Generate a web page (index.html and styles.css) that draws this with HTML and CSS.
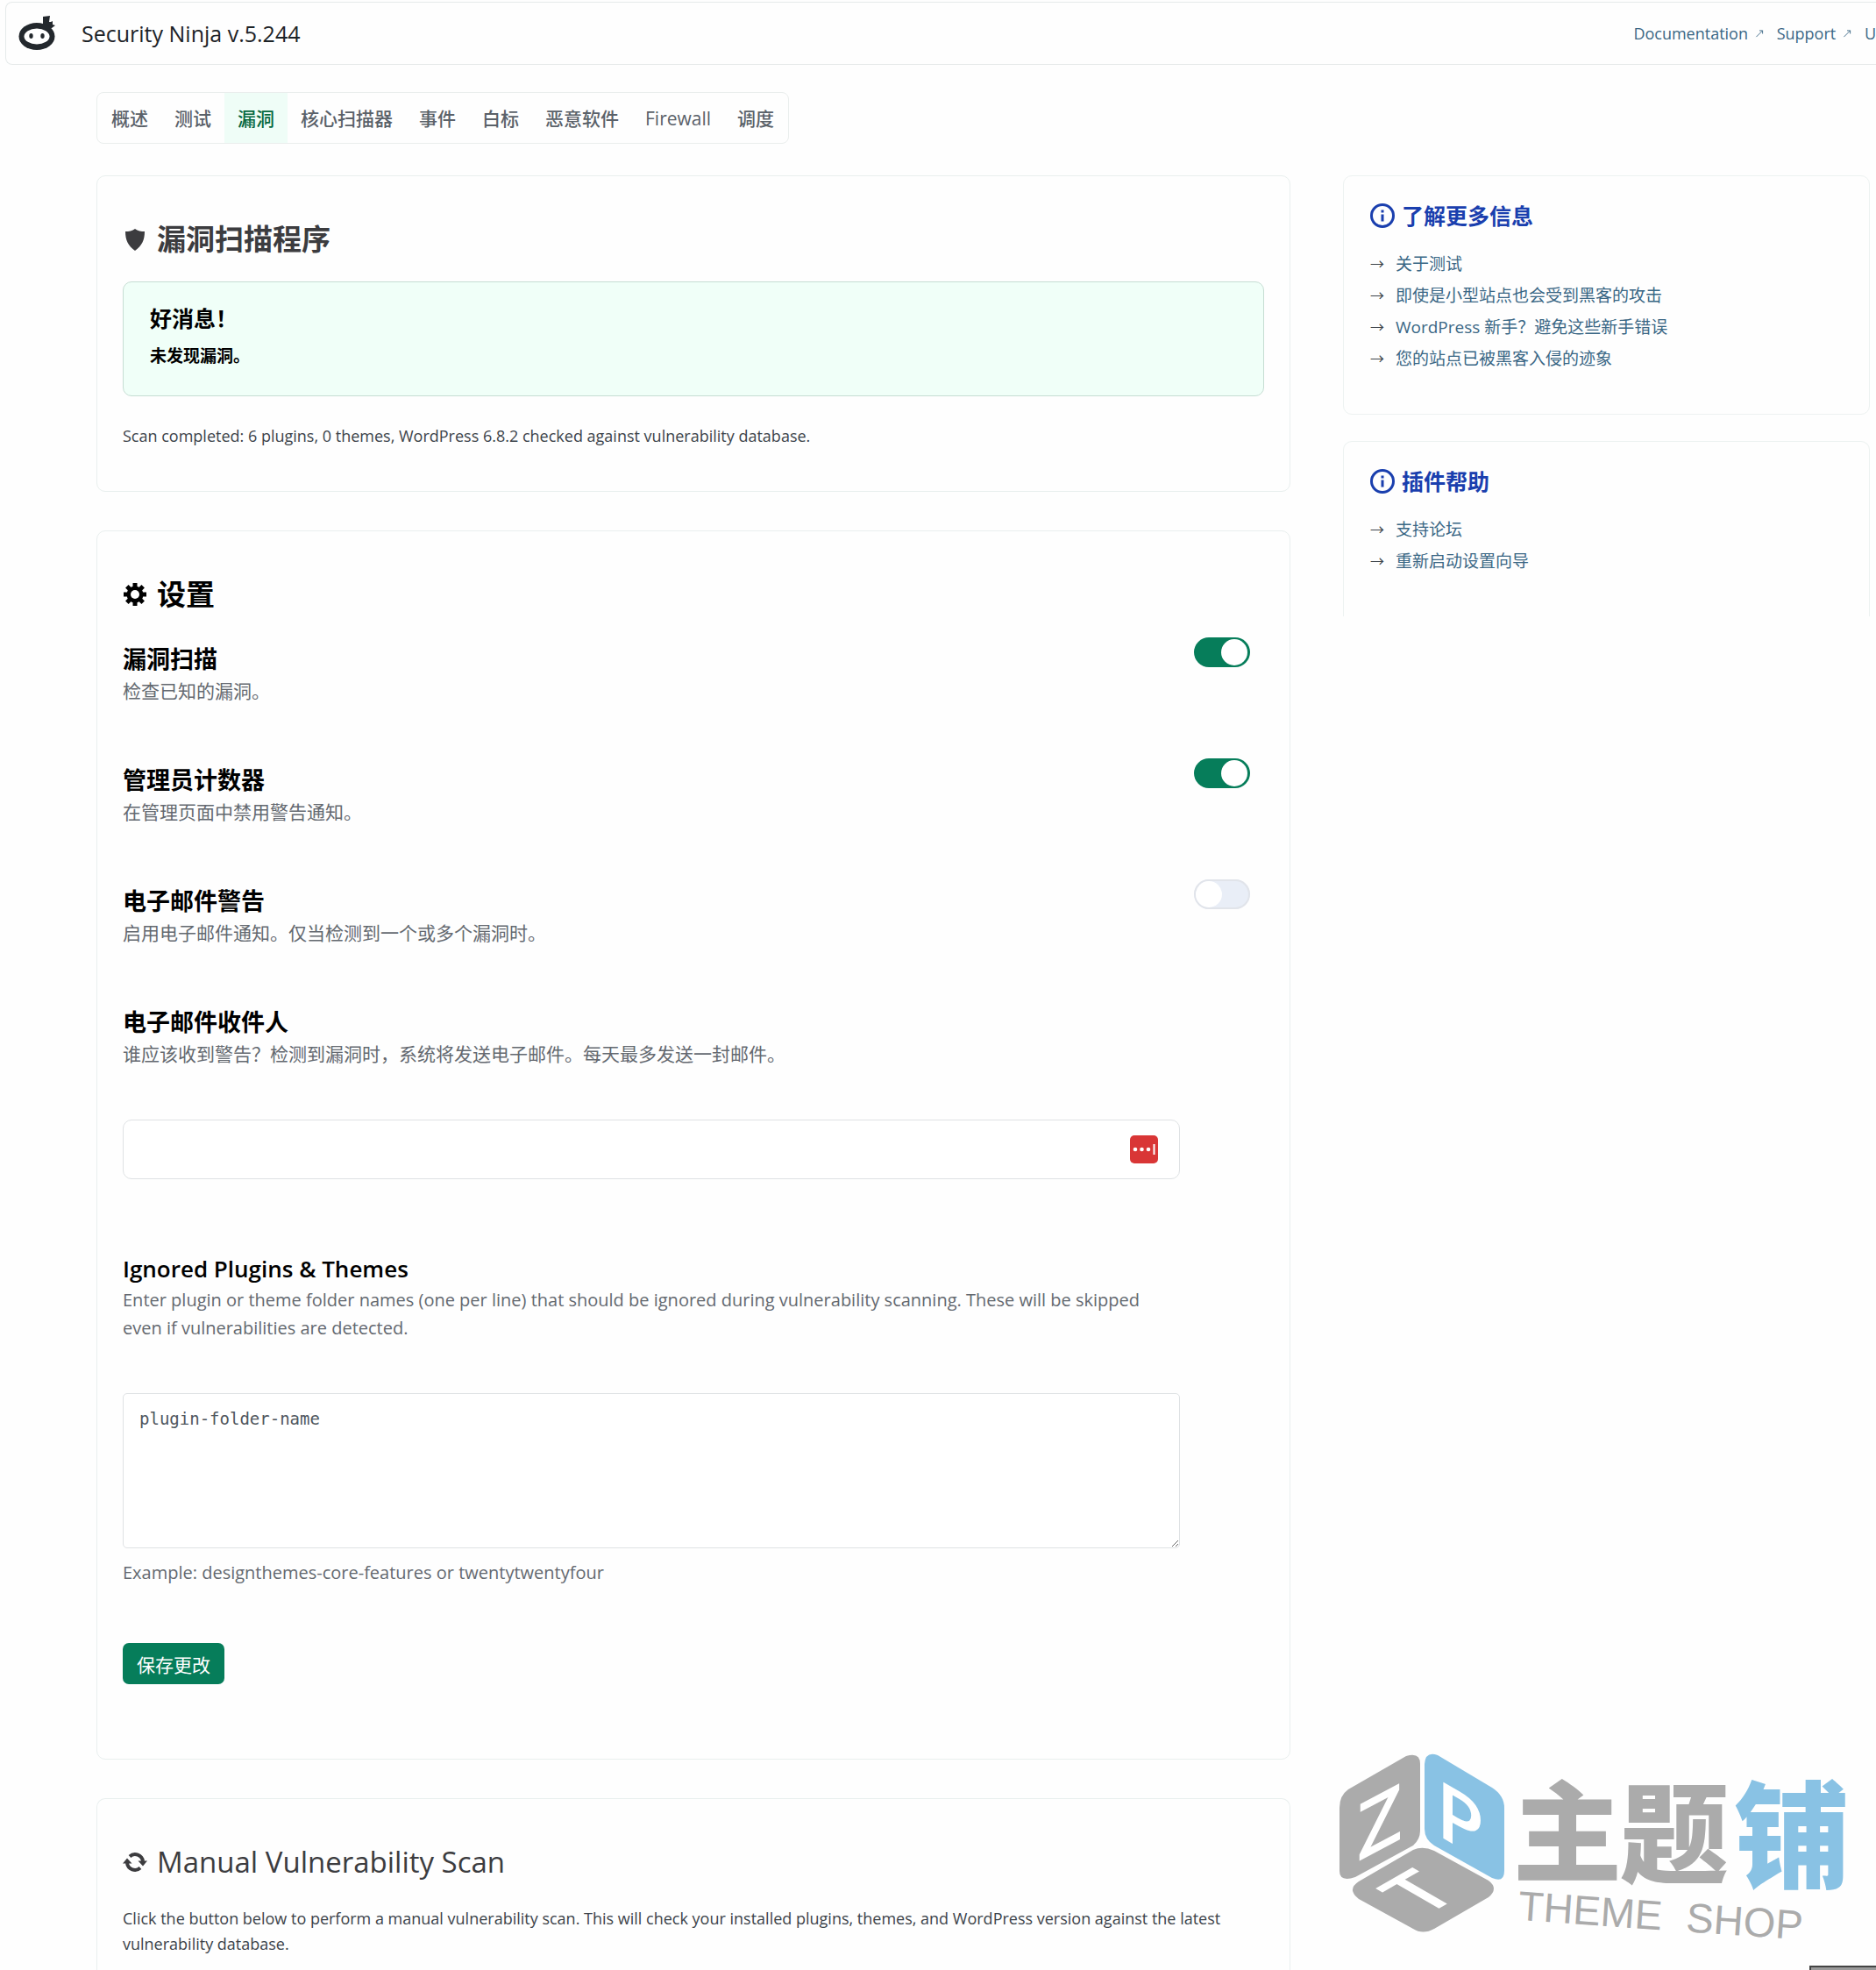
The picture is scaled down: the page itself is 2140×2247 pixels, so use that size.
FILE: index.html
```html
<!DOCTYPE html>
<html lang="zh-CN">
<head>
    <meta charset="UTF-8">
    <meta name="viewport" content="width=device-width, initial-scale=1.0">
    <title>Security Ninja</title>
    <link rel="stylesheet" href="styles.css">
</head>
<body>
    <header class="topbar">
        <svg class="logo" viewBox="0 0 42 40" aria-hidden="true">
            <path fill="#23282d" d="M28 1l8-1-1 7 2 0 2-1 0 4 3 1-4 3-6 2-4-5z"/>
            <ellipse cx="21" cy="23.500" rx="20.500" ry="15.500" fill="#23282d"/>
            <ellipse cx="21" cy="23.500" rx="14.500" ry="9" fill="#fff"/>
            <ellipse cx="14.500" cy="23" rx="2.200" ry="3" fill="#23282d"/>
            <ellipse cx="27.500" cy="23" rx="2.200" ry="3" fill="#23282d"/>
        </svg>
        <h1>Security Ninja v.5.244</h1>
        <div class="top-links">
            <a href="#">Documentation <svg viewBox="0 0 10 10"><path d="M1 9L9 1M5 1h4v4"/></svg></a>
            <a href="#">Support <svg viewBox="0 0 10 10"><path d="M1 9L9 1M5 1h4v4"/></svg></a>
            <a href="#">U</a>
        </div>
    </header>

    <div class="page">
        <nav class="tabs">
            <a href="#">概述</a>
            <a href="#">测试</a>
            <a href="#" class="active">漏洞</a>
            <a href="#">核心扫描器</a>
            <a href="#">事件</a>
            <a href="#">白标</a>
            <a href="#">恶意软件</a>
            <a href="#">Firewall</a>
            <a href="#">调度</a>
        </nav>

        <div class="columns">
            <main class="main">
                <section class="card">
                    <h2 class="grey">
                        <svg class="icon" viewBox="0 0 28 28"><path d="M14 2c3 2.500 7 3 11 3 0 10-3 16-11 22C6 21 3 15 3 5c4 0 8-.5 11-3z"/></svg>
                        漏洞扫描程序
                    </h2>
                    <div class="notice">
                        <h3>好消息！</h3>
                        <p>未发现漏洞。</p>
                    </div>
                    <p class="text">Scan completed: 6 plugins, 0 themes, WordPress 6.8.2 checked against vulnerability database.</p>
                </section>

                <section class="card settings">
                    <h2>
                        <svg class="icon" viewBox="0 0 28 28">
                            <rect x="11.500" y="1" width="5" height="26"/>
                            <rect x="1" y="11.500" width="26" height="5"/>
                            <rect x="11.500" y="1" width="5" height="26" transform="rotate(45 14 14)"/>
                            <rect x="11.500" y="1" width="5" height="26" transform="rotate(-45 14 14)"/>
                            <circle cx="14" cy="14" r="9.500"/>
                            <circle cx="14" cy="14" r="5" fill="#fff"/>
                        </svg>
                        设置
                    </h2>
                    <form>
                        <div class="row">
                            <div class="info">
                                <label for="vulns">漏洞扫描</label>
                                <p>检查已知的漏洞。</p>
                            </div>
                            <input type="checkbox" class="toggle" id="vulns" checked>
                        </div>
                        <div class="row">
                            <div class="info">
                                <label for="counter">管理员计数器</label>
                                <p>在管理页面中禁用警告通知。</p>
                            </div>
                            <input type="checkbox" class="toggle" id="counter" checked>
                        </div>
                        <div class="row">
                            <div class="info">
                                <label for="warnings">电子邮件警告</label>
                                <p>启用电子邮件通知。仅当检测到一个或多个漏洞时。</p>
                            </div>
                            <input type="checkbox" class="toggle" id="warnings">
                        </div>
                        <div class="field">
                            <div class="info">
                                <label for="recipient">电子邮件收件人</label>
                                <p>谁应该收到警告？检测到漏洞时，系统将发送电子邮件。每天最多发送一封邮件。</p>
                            </div>
                            <div class="input-wrap">
                                <input type="text" id="recipient">
                                <svg class="fill-icon" viewBox="0 0 32 32">
                                    <rect width="32" height="32" rx="5" fill="#d93636"/>
                                    <circle cx="6" cy="16" r="2.300" fill="#fff"/>
                                    <circle cx="13.500" cy="16" r="2.300" fill="#fff"/>
                                    <circle cx="21" cy="16" r="2.300" fill="#fff"/>
                                    <rect x="26.500" y="10" width="2" height="12" fill="#fff"/>
                                </svg>
                            </div>
                        </div>
                        <div class="field ignored">
                            <div class="info">
                                <label for="ignored">Ignored Plugins &amp; Themes</label>
                                <p>Enter plugin or theme folder names (one per line) that should be ignored during vulnerability scanning. These will be skipped even if vulnerabilities are detected.</p>
                            </div>
                            <textarea id="ignored" placeholder="plugin-folder-name"></textarea>
                            <p class="example">Example: designthemes-core-features or twentytwentyfour</p>
                        </div>
                        <button type="button" class="save">保存更改</button>
                    </form>
                </section>

                <section class="card last">
                    <h2 class="grey">
                        <svg class="icon" viewBox="0 0 28 28">
                            <path d="M8 7.500a9 9 0 0 1 15 5.500M20 20.500a9 9 0 0 1-15-5.500" fill="none" stroke="currentColor" stroke-width="4"/>
                            <path d="M0 15.500L5 9.500l5.500 6zM17.500 12.500H28l-5 6z"/>
                        </svg>
                        Manual Vulnerability Scan
                    </h2>
                    <p class="text">Click the button below to perform a manual vulnerability scan. This will check your installed plugins, themes, and WordPress version against the latest vulnerability database.</p>
                </section>
            </main>

            <aside class="sidebar">
                <section class="box">
                    <h3>
                        <svg viewBox="0 0 28 28"><circle cx="14" cy="14" r="12.500"/><path d="M14 12.500v8M14 7.500v3"/></svg>
                        了解更多信息
                    </h3>
                    <ul>
                        <li><a href="#">关于测试</a></li>
                        <li><a href="#">即使是小型站点也会受到黑客的攻击</a></li>
                        <li><a href="#">WordPress 新手？避免这些新手错误</a></li>
                        <li><a href="#">您的站点已被黑客入侵的迹象</a></li>
                    </ul>
                </section>
                <section class="box open">
                    <h3>
                        <svg viewBox="0 0 28 28"><circle cx="14" cy="14" r="12.500"/><path d="M14 12.500v8M14 7.500v3"/></svg>
                        插件帮助
                    </h3>
                    <ul>
                        <li><a href="#">支持论坛</a></li>
                        <li><a href="#">重新启动设置向导</a></li>
                    </ul>
                </section>
            </aside>
        </div>
    </div>

    <svg class="watermark" viewBox="0 0 580 212">
        <path fill="#ababab" d="M10 41L76 3Q92-2 92 12V88Q92 98 84 105L18 141Q0 147 0 134V62Q0 48 10 41z"/>
        <path fill="#89c2e4" d="M97 12Q98-3 112 2L174 39Q188 48 188 62V134Q188 148 174 142L108 105Q97 98 97 86z"/>
        <path fill="#ababab" d="M84 110Q95 105 108 111L170 145Q182 154 170 164L108 200Q95 207 84 200L22 166Q8 155 22 146z"/>
        <g class="cube-letters">
            <text transform="translate(20 124) skewY(-28)">Z</text>
            <text transform="translate(110 92) skewY(30)">P</text>
            <text transform="matrix(.87 -.5 .87 .5 118 174)" text-anchor="middle">T</text>
        </g>
        <g class="shop-name">
            <text x="198" y="136">主</text>
            <text x="320" y="138">题</text>
            <text x="450" y="143" class="blue">铺</text>
        </g>
        <g class="shop-latin" transform="rotate(4 205 190)">
            <text x="203" y="190">THEME</text>
            <text x="395" y="190">SHOP</text>
        </g>
    </svg>
    <div class="corner"></div>
</body>
</html>
```

FILE: styles.css
```css
* {
    box-sizing: border-box;
}

body {
    margin: 0;
    min-height: 100vh;
    display: flex;
    flex-direction: column;
    background-color: #fefefe;
    color: #3c434a;
    font-family: "Open Sans", "Noto Sans CJK SC", sans-serif;
    font-size: 19px;
    line-height: 29px;
    overflow-x: hidden;
}

h1, h2, h3, p, ul {
    margin: 0;
    padding: 0;
}

a {
    color: #3a6785;
    text-decoration: none;
}

/* Header */
.topbar {
    display: flex;
    align-items: center;
    height: 72px;
    margin: 2px 0 0 6px;
    padding-left: 14px;
    border: 1px solid #e6eaea;
    border-right: none;
    border-radius: 8px 0 0 8px;
}

.logo {
    width: 42px;
    height: 40px;
}

.topbar h1 {
    margin-left: 30px;
    color: #1d2327;
    font-size: 25px;
    font-weight: 500;
}

.top-links {
    display: flex;
    gap: 15px;
    margin-left: auto;
    font-size: 18px;
}

.top-links svg {
    width: 10px;
    height: 9px;
    margin: 0 0 2px 3px;
    fill: none;
    stroke: #3a6785;
}

/* Tabs */
.page {
    flex: 1;
    display: flex;
    flex-direction: column;
    align-items: flex-start;
    padding: 31px 7px 0 110px;
}

.tabs {
    display: flex;
    padding: 0 1px;
    border: 1px solid #eaeeed;
    border-radius: 8px;
}

.tabs a {
    padding: 15px 15px 13px;
    color: #5a6169;
    font-size: 21px;
    font-weight: 500;
}

.tabs .active {
    background-color: #effdf7;
    color: #04683f;
}

/* Cards */
.columns {
    flex: 1;
    display: flex;
    gap: 60px;
    align-self: stretch;
    margin-top: 36px;
}

.main {
    flex: 1;
    display: flex;
    flex-direction: column;
    gap: 44px;
}

.card {
    padding: 48px 29px;
    border: 1px solid #e9efee;
    border-radius: 10px;
}

.card.last {
    flex: 1;
    padding-bottom: 0;
    border-bottom: none;
    border-radius: 10px 10px 0 0;
}

h2 {
    display: flex;
    align-items: center;
    gap: 11px;
    color: #000;
    font-size: 33px;
    font-weight: 600;
    line-height: 48px;
}

.grey {
    color: #3c3c3f;
}

.last h2 {
    font-weight: 500;
}

.icon {
    width: 28px;
    height: 28px;
    fill: currentColor;
}

.notice {
    margin: 24px 0 31px;
    padding: 23px 30px 30px;
    border: 1px solid #c6ddd3;
    border-radius: 10px;
    background-color: #f0fff8;
    color: #000;
}

.notice h3 {
    font-size: 25px;
    line-height: 36px;
}

.notice p {
    margin-top: 11px;
    font-weight: 700;
}

.text {
    font-size: 18px;
}

.last .text {
    margin-top: 26px;
}

/* Settings */
.row {
    display: flex;
    justify-content: space-between;
    align-items: flex-start;
    height: 138px;
    padding-right: 16px;
}

.settings form {
    padding-top: 25px;
}

.info label {
    display: block;
    color: #000;
    font-size: 27px;
    font-weight: 600;
    line-height: 40px;
}

.info p, .example {
    color: #646970;
    font-size: 21px;
    line-height: 32px;
}

.row .info {
    padding-top: 5px;
}

.toggle {
    appearance: none;
    position: relative;
    width: 64px;
    height: 34px;
    margin: 0;
    border-radius: 17px;
    background-color: #e9eef7;
    box-shadow: inset 0 0 0 2px #e1e4ea;
}

.toggle::before {
    content: "";
    position: absolute;
    top: 2px;
    left: 2px;
    width: 30px;
    height: 30px;
    border-radius: 50%;
    background-color: #fff;
}

.toggle:checked {
    background-color: #067d5a;
    box-shadow: none;
}

.toggle:checked::before {
    left: 31px;
}

.field {
    max-width: 1206px;
    padding-top: 5px;
}

.input-wrap {
    position: relative;
    margin-top: 59px;
}

.field input, .field textarea {
    display: block;
    width: 100%;
    border: 1px solid #dfe2e4;
    border-radius: 10px;
    background-color: #fff;
}

.field input {
    height: 68px;
    padding: 0 64px 0 18px;
    font-size: 21px;
}

.fill-icon {
    position: absolute;
    top: 18px;
    right: 25px;
    width: 32px;
    height: 32px;
}

.ignored {
    margin-top: 77px;
}

.field textarea {
    height: 177px;
    margin-top: 58px;
    padding: 14px 18px;
    border-radius: 5px;
    font-family: "DejaVu Sans Mono", monospace;
    font-size: 19px;
    line-height: 29px;
}

.field textarea::placeholder {
    color: #50575e;
}

.ignored label {
    font-size: 26px;
}

.ignored p {
    font-size: 20px;
}

.example {
    margin-top: 12px;
}

.save {
    display: block;
    height: 47px;
    margin: 64px 0 37px;
    padding: 0 16px;
    border: none;
    border-radius: 7px;
    background-color: #067d5a;
    color: #fff;
    font-family: inherit;
    font-size: 21px;
    font-weight: 400;
}

/* Sidebar */
.sidebar {
    width: 601px;
}

.box {
    margin-bottom: 30px;
    padding: 27px 30px 45px;
    border: 1px solid #edf2f1;
    border-radius: 10px;
}

.box.open {
    border-bottom: none;
    border-radius: 10px 10px 0 0;
}

.box h3 {
    display: flex;
    align-items: center;
    gap: 8px;
    margin-bottom: 19px;
    color: #1a3fae;
    font-size: 25px;
    line-height: 36px;
}

.box h3 svg {
    width: 28px;
    height: 28px;
    fill: none;
    stroke: currentColor;
    stroke-width: 3;
}

.box ul {
    list-style: none;
}

.box li {
    display: flex;
    line-height: 36px;
}

.box li::before {
    content: "→";
    width: 29px;
    font-size: 16px;
}

/* Watermark over the page */
.watermark {
    position: absolute;
    top: 2000px;
    right: 32px;
    width: 580px;
    height: 212px;
    overflow: visible;
}

.cube-letters {
    fill: #fff;
    font-family: "Open Sans", sans-serif;
    font-size: 90px;
    font-weight: 600;
}

.shop-name {
    fill: #ababab;
    font-family: "Noto Sans CJK SC", sans-serif;
    font-size: 124px;
    font-weight: 900;
}

.shop-name .blue {
    fill: #89c2e4;
    font-size: 132px;
}

.shop-latin {
    fill: #ababab;
    font-family: "Liberation Sans", sans-serif;
    font-size: 47px;
}

.corner {
    position: fixed;
    right: 0;
    bottom: 0;
    width: 76px;
    height: 5px;
    border-top: 2px solid #444;
    border-left: 2px solid #444;
    background-color: #999;
}
```
